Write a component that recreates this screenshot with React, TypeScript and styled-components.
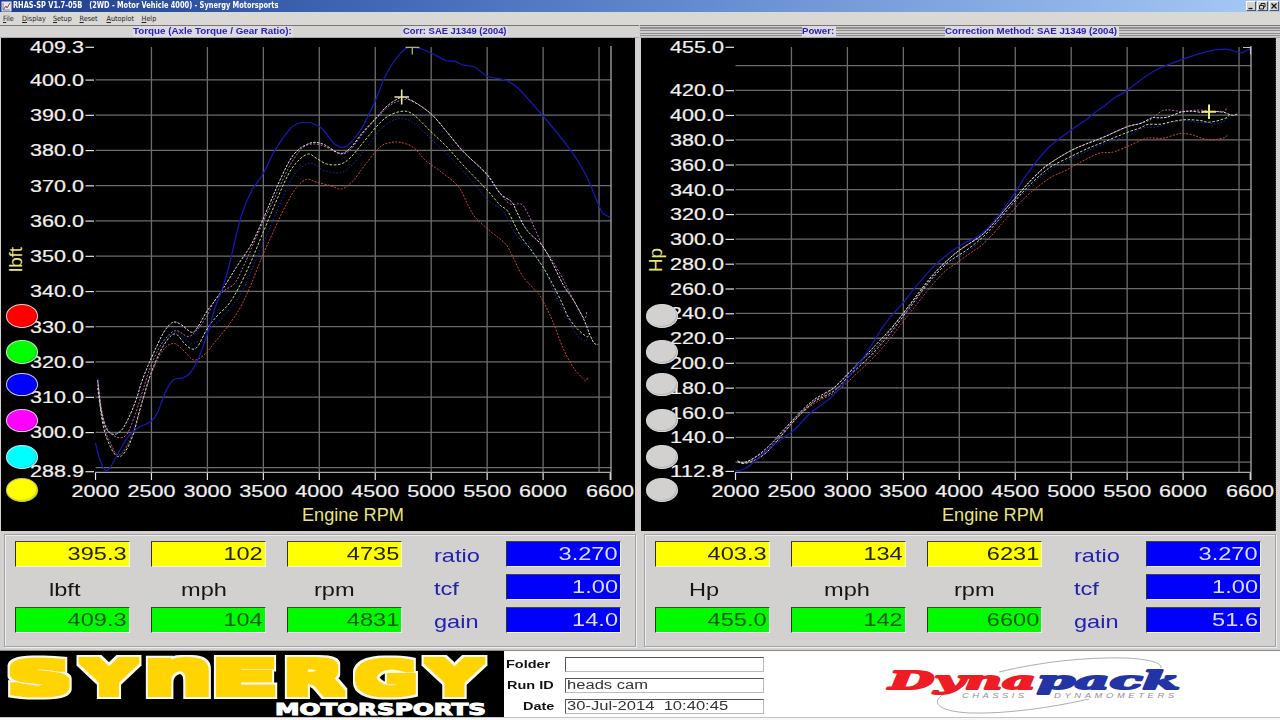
// Library imports
import React, { FC } from 'react';
import styled, { createGlobalStyle } from 'styled-components';

type Point = [number, number];

interface Channel {
    color: string;
    dash?: string;
    points: Point[];
}

interface ReadoutCell {
    peak: string;
    unit: string;
    indent: number;
    compare: string;
}

const GlobalStyle = createGlobalStyle`
    * {
        box-sizing: border-box;
    }

    body {
        margin: 0;
        background: #f6f6f6;
        font-family: 'Liberation Sans', Arial, sans-serif;
        overflow: hidden;
    }
`;

const Window = styled.div`
    width: 1280px;
    height: 718px;
    display: flex;
    flex-direction: column;
    background: #d2d1d0;
`;

const TitleBar = styled.div`
    height: 12px;
    display: flex;
    align-items: center;
    padding: 0 1px 0 1px;
    background: linear-gradient(90deg, #1e3d8c 0%, #3c62b0 25%, #6c93d4 60%, #a8caf6 100%);
`;

const Stretch = styled.span<{ $x: number; $origin?: string }>`
    display: inline-block;
    white-space: pre;
    transform: scaleX(${({ $x }) => $x});
    transform-origin: ${({ $origin }) => $origin || 'left'} center;
`;

const Title = styled.div`
    flex: 1;
    margin-left: 1px;
    color: #fff;
    font: bold 8px/12px 'DejaVu Sans Condensed', 'DejaVu Sans', sans-serif;
`;

const WindowButtons = styled.div`
    display: flex;
    gap: 1px;
`;

const WindowButton = styled.div`
    width: 10.5px;
    height: 10px;
    display: flex;
    background: #d6d3ce;
    border: 1px solid;
    border-color: #fff #555 #555 #fff;
`;

const MenuBar = styled.div`
    height: 13px;
    display: flex;
    background: #dad8d4;
    padding-left: 3px;
`;

const MenuItem = styled.div<{ $width: number }>`
    width: ${({ $width }) => $width}px;
    color: #222;
    font: 7.2px/14px 'DejaVu Sans Condensed', 'DejaVu Sans', sans-serif;

    &::first-letter {
        text-decoration: underline;
    }
`;

const Panels = styled.div`
    display: flex;
    height: 625px;
`;

const Panel = styled.div`
    width: 640px;
    display: flex;
    flex-direction: column;
`;

const Caption = styled.div<{ $striped?: boolean }>`
    height: 13px;
    display: flex;
    border-top: 1px solid #777;
    border-bottom: 1px solid #aaa;
    margin-right: ${({ $striped }) => ($striped ? 0 : 1)}px;
    background: ${({ $striped }) =>
        $striped ? 'repeating-linear-gradient(180deg, #cfcfcf 0 1.5px, #8e8e8e 1.5px 2.6px)' : '#d6d4d2'};
`;

const CaptionText = styled.div<{ $left: number; $width: number }>`
    margin-left: ${({ $left }) => $left}px;
    width: ${({ $width }) => $width}px;
    background: #dcdbe0;
    color: #2a22b4;
    font-size: 9px;
    line-height: 11px;
    font-weight: bold;
    white-space: nowrap;
`;

const ChartArea = styled.div<{ $dotted?: boolean }>`
    position: relative;
    height: 493px;
    margin: 0 ${({ $dotted }) => ($dotted ? 4 : 5)}px 0 1px;
    border-right: ${({ $dotted }) => ($dotted ? '1px dotted #333' : 'none')};
    background: #000;
`;

const ChartSvg = styled.svg`
    display: block;
    font-family: 'Liberation Sans', Arial, sans-serif;
`;

const Lamps = styled.div`
    position: absolute;
    left: 5px;
    top: 266px;
    display: grid;
    grid-template-rows: 36px 32.5px 36px 36.5px 33px 24px;
`;

const Lamp = styled.button<{ $color: string; $rim: string }>`
    width: 32px;
    height: 23.5px;
    padding: 0;
    border: 1.8px solid ${({ $rim }) => $rim};
    border-radius: 50%;
    background: ${({ $color }) => $color};
    box-shadow: inset -1px -1px 0.5px rgba(0, 0, 0, 0.14);
`;

const Readout = styled.div`
    flex: 1;
    margin: 3px 4px 3px 4px;
    padding: 6px 10px 0;
    border: 1px solid #a2a2a2;
    box-shadow: inset 1px 1px #eee, 1px 1px #eee;
    display: grid;
    grid-template-columns: 115px 115px 115px 61.5px 115px;
    grid-template-rows: 26px 26px 26px;
    column-gap: 21px;
    row-gap: 7px;
    align-content: start;
`;

const Field = styled.div<{ $tone: string; $ink: string }>`
    height: 26px;
    padding-right: 2px;
    border: 1px solid;
    border-color: #444 #f2f2f2 #f2f2f2 #333;
    background: ${({ $tone }) => $tone};
    color: ${({ $ink }) => $ink};
    font-size: 19px;
    line-height: 24px;
    text-align: right;
`;

const Unit = styled.div<{ $indent: number; $color?: string }>`
    padding-left: ${({ $indent }) => $indent}px;
    color: ${({ $color }) => $color || '#151515'};
    font-size: 19px;
    line-height: ${({ $color }) => ($color ? 30 : 31)}px;
`;

const Footer = styled.div`
    height: 68px;
    display: flex;
    background: #fff;
    border-top: 1px solid #888;
    border-bottom: 1px solid #c4c4c4;
`;

const Sponsor = styled.div`
    width: 504px;
    background: #000;
`;

const RunForm = styled.div`
    width: 366px;
    padding-top: 6px;
    display: flex;
    flex-direction: column;
    gap: 6px;
`;

const FormRow = styled.div`
    height: 15px;
    display: flex;
`;

const FormLabel = styled.label<{ $indent: number }>`
    width: 61px;
    padding-left: ${({ $indent }) => $indent}px;
    color: #111;
    font-size: 11.3px;
    line-height: 15px;
    font-weight: bold;
    white-space: nowrap;
`;

const FormValue = styled.div`
    width: 199px;
    height: 15px;
    padding-left: 1px;
    border: 1px solid;
    border-color: #555 #bbb #bbb #555;
    color: #333;
    font-size: 12px;
    line-height: 13px;
`;

const plot = { left: 95.5, right: 611, top: 47, bottom: 472 };
const rpmScale = 0.1119;
const torqueScale = 3.525;
const powerScale = 1.2394;

const rpmX = (rpm: number) => plot.left + (rpm - 2000) * rpmScale;
const torqueY = (lbft: number) => plot.top + (409.3 - lbft) * torqueScale;
const powerY = (hp: number) => plot.top + (455 - hp) * powerScale;

// Torque traces, in plot units
const channels: Channel[] = [
    {
        color: '#d0483c',
        dash: '2 1.4',
        points: [
            [98, 385], [104, 425], [111, 444], [118, 455], [126, 448], [135, 428], [143, 400], [152, 372], [163, 350],
            [174, 343.5], [183, 350], [194, 360], [205, 354], [215, 342], [228, 326], [240, 308], [250, 287],
            [262, 257], [275, 228], [287, 203], [297, 187], [306.7, 179.3], [316, 182], [330, 185.5], [341.7, 189],
            [353, 180.7], [365, 165], [380, 147], [390, 142.7], [400, 142.3], [413.3, 147.3], [425, 160], [440, 171],
            [458, 186], [467, 203], [475, 217], [490, 231], [505, 243.3], [512, 255], [523, 276.7], [537, 292],
            [543, 301], [553, 322], [563, 348], [573, 367], [583, 378.7], [586, 380.5], [588, 377],
        ],
    },
    {
        color: '#2020b4',
        dash: '1.6 1.8',
        points: [
            [98, 379], [104, 425], [111, 446], [118, 455], [126, 446], [135, 425], [150, 377], [163, 345], [176, 332],
            [190, 343], [200, 340], [210, 328], [220, 320], [232, 306], [243, 290], [255, 262], [268, 232],
            [280, 204], [292, 178], [303, 166], [312, 163.5], [325, 171], [341, 172.5], [352, 165], [364, 151],
            [378, 132], [390, 122], [402, 118.3], [415, 124], [432, 140], [450, 157], [470, 179], [490, 202],
            [503, 211], [515, 233], [528, 248], [543, 268], [557, 298], [568, 318], [576, 334], [585, 341], [588, 337],
        ],
    },
    {
        color: '#b8dc8c',
        dash: '2.6 1.6',
        points: [
            [97.7, 388], [103, 425], [110, 446], [117.5, 456.5], [125, 452], [133, 435], [140, 409], [150, 376],
            [160, 352], [170, 336.7], [176.7, 334.5], [184, 343], [191.7, 349], [198, 346], [207, 329], [217, 316],
            [228, 305], [238, 289], [250, 264], [262, 235], [275, 204], [288, 175], [298, 161], [308.3, 154],
            [316, 158], [326.7, 164], [340, 164.3], [350, 158], [361.7, 144.3], [376.7, 126.3], [388.3, 116],
            [402, 111.3], [413, 114.3], [431, 131.7], [447, 147], [463, 165], [487, 190], [500, 205], [508, 211.7],
            [520, 235], [532, 251], [543, 267], [553, 285], [562, 303], [568, 316.5], [577, 328.5], [587, 336.7],
            [589, 333],
        ],
    },
    {
        color: '#b26ab0',
        dash: '2 1.6',
        points: [
            [97.7, 382], [102, 412], [108, 430], [118, 437.5], [127, 434], [136, 412], [143, 390], [150, 368],
            [158, 350], [166, 338], [176, 330.5], [188, 336.5], [197, 330], [207, 316], [215, 300], [225, 290],
            [235, 283], [245, 263], [260, 229], [275, 197], [288, 169], [298, 153], [305, 146], [315, 144],
            [326, 147], [341, 154], [351, 149], [364, 132], [377, 118], [389, 106], [402, 100], [413, 101],
            [433, 116], [447, 132], [464, 152], [487, 175], [500, 193], [510, 204], [521, 204], [527, 212],
            [535, 229], [543, 247], [552, 260], [563, 279], [573, 299], [584, 318], [587, 311],
        ],
    },
    {
        color: '#dcdcdc',
        dash: '2.6 1.2',
        points: [
            [97.7, 380], [101, 410], [106, 428], [113.3, 434.3], [121.7, 430], [130, 415], [136.7, 398],
            [141.7, 381.7], [148.3, 365], [155, 350], [163.3, 333], [170, 324.3], [175, 322], [181.7, 325],
            [191.7, 332.3], [198, 326.7], [206.7, 311.7], [220, 293.3], [236.7, 266.7], [250, 246.7], [258.3, 230],
            [270, 203], [280, 180], [290, 160], [298, 150], [306.7, 144.5], [315, 142.3], [325, 145], [340, 153.3],
            [350, 148.3], [363.3, 131.7], [376.7, 117.3], [388.3, 105], [401.7, 97.3], [410, 100], [421.7, 106.7],
            [433.3, 116], [446.7, 131.7], [463.3, 151.7], [486.7, 174], [500, 193.3], [511.7, 202], [516.7, 211.7],
            [526.7, 230], [541.7, 245], [551.7, 261.7], [563.3, 285], [573.3, 300], [583.3, 318.3], [590, 335],
            [594.3, 343.3], [598.3, 344.3],
        ],
    },
    {
        color: '#1818bc',
        points: [
            [95.5, 443], [100, 460], [106, 470.5], [111.7, 465], [120, 450], [128, 437], [138, 428], [151.7, 421],
            [158, 411.5], [165, 393], [171.7, 381.5], [177, 378.5], [183, 378], [190, 373], [197, 361.5], [207, 335],
            [215, 308], [223, 287], [230, 262], [237.5, 230], [243, 211], [252, 190], [263, 174], [275, 150],
            [290, 129], [298, 123.5], [305, 122.5], [313, 123.5], [323, 129.5], [333, 142.5], [341.7, 147.3],
            [350, 143.3], [361.7, 128.3], [370, 111.7], [376, 99.3], [385, 76.7], [395, 60], [405, 49],
            [411.7, 47.3], [421.7, 49], [433, 54], [446.7, 60.7], [455, 61.3], [463, 65], [475, 67.3], [486.7, 76],
            [505, 80], [518, 88.3], [543, 116], [568, 146.7], [585, 173.3], [598, 203.3], [603, 213.3], [610, 217],
        ],
    },
];

// hp = lbft * rpm / 5252
const toPower = ([x, y]: Point): Point => {
    const rpm = 2000 + (x - plot.left) / rpmScale;
    const lbft = 409.3 - (y - plot.top) / torqueScale;
    return [x, powerY((lbft * rpm) / 5252)];
};

const smoothPath = (points: Point[]) =>
    points.reduce((d, [x, y], i) => {
        if (i === 0) return `M${x} ${y}`;
        const [ax, ay] = points[Math.max(i - 2, 0)];
        const [bx, by] = points[i - 1];
        const [cx, cy] = points[Math.min(i + 1, points.length - 1)];
        return `${d}C${bx + (x - ax) / 6} ${by + (y - ay) / 6} ${x - (cx - bx) / 6} ${y - (cy - by) / 6} ${x} ${y}`;
    }, '');

const rpmTicks = [2000, 2500, 3000, 3500, 4000, 4500, 5000, 5500, 6000, 6600];
const rpmGrid = [2500, 3000, 3500, 4000, 4500, 5000, 5500, 6000, 6500];

const range = (from: number, to: number, step: number) => {
    const out: number[] = [];
    for (let v = from; v <= to; v += step) out.push(v);
    return out;
};

interface ChartProps {
    unit: string;
    unitLength: number;
    labels: number[];
    grid: number[];
    scaleY: (v: number) => number;
    convert?: (p: Point) => Point;
    lamps: string[][];
    dotted?: boolean;
    children?: React.ReactNode;
}

const Chart: FC<ChartProps> = (props: ChartProps) => {
    const { unit, unitLength, labels, grid, scaleY, convert, lamps, dotted, children } = props;

    return (
        <ChartArea $dotted={dotted}>
            <ChartSvg width="634" height="493" viewBox="1 38 634 493">
                <g stroke="#6c6c6c" strokeWidth="1.3">
                    {grid.map((v) => (
                        <line key={v} x1={plot.left} x2={plot.right} y1={scaleY(v)} y2={scaleY(v)} />
                    ))}
                    {rpmGrid.map((rpm) => (
                        <line key={rpm} x1={rpmX(rpm)} x2={rpmX(rpm)} y1={plot.top} y2={plot.bottom} />
                    ))}
                </g>
                <path d="M95 472.4H611M611 46V480" stroke="#a8a8a8" strokeWidth="1.3" fill="none" />
                {channels.map(({ color, dash, points }) => (
                    <path
                        key={color}
                        d={smoothPath(convert ? points.map(convert) : points)}
                        fill="none"
                        stroke={color}
                        strokeWidth={dash ? 1 : 1.2}
                        strokeDasharray={dash}
                    />
                ))}
                <g stroke="#e4e4e4" strokeWidth="1.2">
                    {labels.map((v) => (
                        <line key={v} x1="85.5" x2="94" y1={scaleY(v) + 0.3} y2={scaleY(v) + 0.3} />
                    ))}
                    {rpmTicks.map((rpm) => (
                        <line key={rpm} x1={Math.min(rpmX(rpm), 611)} x2={Math.min(rpmX(rpm), 611)} y1="473" y2="480" />
                    ))}
                </g>
                <g fill="#f0f0f0" stroke="#f0f0f0" strokeWidth="0.2" fontSize="16.6">
                    {labels.map((v) => (
                        <text key={v} x="30" y={scaleY(v) + 6} textLength="54" lengthAdjust="spacingAndGlyphs">
                            {v.toFixed(1)}
                        </text>
                    ))}
                    {rpmTicks.map((rpm) => (
                        <text
                            key={rpm}
                            x={Math.min(rpmX(rpm), 610) - 24}
                            y="496.5"
                            textLength="48"
                            lengthAdjust="spacingAndGlyphs"
                        >
                            {rpm}
                        </text>
                    ))}
                </g>
                <g fill="#e6e67c" fontSize="18.6">
                    <text x="302" y="521" textLength="102" lengthAdjust="spacingAndGlyphs">
                        Engine RPM
                    </text>
                    <text
                        transform="translate(22.3 272) rotate(-90)"
                        textLength={unitLength}
                        lengthAdjust="spacingAndGlyphs"
                    >
                        {unit}
                    </text>
                </g>
                {children}
            </ChartSvg>
            <Lamps>
                {lamps.map(([color, rim], i) => (
                    <Lamp key={i} $color={color} $rim={rim} />
                ))}
            </Lamps>
        </ChartArea>
    );
};

interface ReadoutProps {
    cells: ReadoutCell[];
    gain: string;
}

const Readouts: FC<ReadoutProps> = ({ cells, gain }: ReadoutProps) => (
    <Readout>
        {cells.map(({ unit, peak }) => (
            <Field key={unit} $tone="#ffff00" $ink="#222200">
                <Stretch $x={1.24} $origin="right">{peak}</Stretch>
            </Field>
        ))}
        <Unit $indent={11} $color="#2222aa">
            <Stretch $x={1.24}>ratio</Stretch>
        </Unit>
        <Field $tone="#0000fb" $ink="#dcdcff">
            <Stretch $x={1.24} $origin="right">3.270</Stretch>
        </Field>
        {cells.map(({ unit, indent }) => (
            <Unit key={unit} $indent={indent}>
                <Stretch $x={1.24}>{unit}</Stretch>
            </Unit>
        ))}
        <Unit $indent={11} $color="#2222aa">
            <Stretch $x={1.24}>tcf</Stretch>
        </Unit>
        <Field $tone="#0000fb" $ink="#dcdcff">
            <Stretch $x={1.24} $origin="right">1.00</Stretch>
        </Field>
        {cells.map(({ unit, compare }) => (
            <Field key={unit} $tone="#00fb00" $ink="#0a5a0a">
                <Stretch $x={1.24} $origin="right">{compare}</Stretch>
            </Field>
        ))}
        <Unit $indent={11} $color="#2222aa">
            <Stretch $x={1.24}>gain</Stretch>
        </Unit>
        <Field $tone="#0000fb" $ink="#dcdcff">
            <Stretch $x={1.24} $origin="right">{gain}</Stretch>
        </Field>
    </Readout>
);

// glyph, left edge, right edge, ink start and end in em, ink height in em
const wordmark: [string, number, number, number, number, number][] = [
    ['S', 9, 71, 0.066, 0.66, 0.755],
    ['Y', 78, 140, -0.01, 0.734, 0.729],
    ['n', 148, 209, 0.084, 0.634, 0.56],
    ['E', 216, 278, 0.092, 0.637, 0.729],
    ['R', 287, 348, 0.092, 0.777, 0.729],
    ['G', 355, 416, 0.05, 0.747, 0.755],
    ['Y', 423, 486, -0.01, 0.734, 0.729],
];

const SynergyLogo: FC = () => (
    <svg
        width="504"
        height="66"
        viewBox="0 652 504 66"
        fontFamily="'DejaVu Sans', sans-serif"
        fontWeight="bold"
        overflow="visible"
    >
        <filter id="halo" x="-5%" y="-20%" width="110%" height="140%">
            <feMorphology in="SourceGraphic" operator="dilate" radius="3 3" result="heavy" />
            <feMorphology in="SourceAlpha" operator="dilate" radius="5 5" result="wide" />
            <feFlood floodColor="#fffbe8" />
            <feComposite in2="wide" operator="in" result="rim" />
            <feMerge>
                <feMergeNode in="rim" />
                <feMergeNode in="heavy" />
            </feMerge>
        </filter>
        <g filter="url(#halo)" fill="#ffd400" fontSize="48">
            {wordmark.map(([glyph, left, right, inkStart, inkEnd, inkHeight], i) => {
                const sx = (right - left - 6) / ((inkEnd - inkStart) * 48);
                const sy = 34 / (inkHeight * 48);
                return (
                    <text key={i} transform={`translate(${left + 3 - inkStart * 48 * sx} 695) scale(${sx} ${sy})`}>
                        {glyph}
                    </text>
                );
            })}
        </g>
        <text
            x="275"
            y="715.8"
            fill="#fff"
            stroke="#fff"
            strokeWidth="1"
            fontSize="15"
            textLength="211"
            lengthAdjust="spacingAndGlyphs"
        >
            MOTORSPORTS
        </text>
    </svg>
);

const DynapackLogo: FC = () => (
    <svg width="410" height="66" viewBox="870 652 410 66">
        <g fill="none" stroke="#a4a4a8" strokeWidth="0.9">
            <path d="M999 673C1040 663 1085 658 1125 659C1150 660 1162 664 1161 669" />
            <path d="M944 695C932 702 934 712 970 714C1005 715 1050 709 1089 700" />
        </g>
        <g
            fontFamily="'DejaVu Serif', serif"
            fontWeight="bold"
            fontStyle="italic"
            fontSize="24.5"
            strokeWidth="1.9"
            strokeLinejoin="round"
        >
            <text x="889" y="690" fill="#ee1c24" stroke="#ee1c24" textLength="147" lengthAdjust="spacingAndGlyphs">
                Dyna
            </text>
            <text x="1037" y="690" fill="#2334a4" stroke="#2334a4" textLength="143" lengthAdjust="spacingAndGlyphs">
                pack
            </text>
        </g>
        <g fill="#909094" fontFamily="'Liberation Sans', sans-serif" fontStyle="italic" fontSize="7">
            <text transform="translate(962 699) scale(1.35 1)" textLength="46">
                CHASSIS
            </text>
            <text transform="translate(1054 699) scale(1.35 1)" textLength="89">
                DYNAMOMETERS
            </text>
        </g>
    </svg>
);

const menu: [string, number][] = [
    ['File', 19],
    ['Display', 31],
    ['Setup', 26.5],
    ['Reset', 27],
    ['Autoplot', 35],
    ['Help', 30],
];

const colorLamps = [
    ['#ff0000', '#ecd0d0'],
    ['#00ff00', '#c4e8c4'],
    ['#0000ff', '#c8c8f0'],
    ['#ff00ff', '#ecc8ec'],
    ['#00ffff', '#c4ecec'],
    ['#ffff00', '#c8c864'],
];
const greyLamps = colorLamps.map(() => ['#d2d1d0', '#d8d8d8']);

const torqueCells: ReadoutCell[] = [
    { peak: '395.3', unit: 'lbft', indent: 33.5, compare: '409.3' },
    { peak: '102', unit: 'mph', indent: 29.5, compare: '104' },
    { peak: '4735', unit: 'rpm', indent: 27, compare: '4831' },
];

const powerCells: ReadoutCell[] = [
    { peak: '403.3', unit: 'Hp', indent: 33.5, compare: '455.0' },
    { peak: '134', unit: 'mph', indent: 32.5, compare: '142' },
    { peak: '6231', unit: 'rpm', indent: 27, compare: '6600' },
];

const App: FC = () => (
    <>
        <GlobalStyle />
        <Window>
            <TitleBar>
                <svg width="11" height="11" viewBox="0 0 11 11">
                    <rect x="0.5" y="0.5" width="10" height="10" fill="#e8e4ec" />
                    <path d="M2 9L5 5L6 7L9 2" stroke="#a04848" fill="none" />
                    <path d="M2 2V9H9" stroke="#5868a0" fill="none" strokeWidth="0.8" />
                </svg>
                <Title>
                    <Stretch $x={0.922}>RHAS-SP V1.7-05B   (2WD - Motor Vehicle 4000) - Synergy Motorsports</Stretch>
                </Title>
                <WindowButtons>
                    <WindowButton>
                        <svg width="8" height="8">
                            <path d="M1.5 6.5H5.5" stroke="#111" strokeWidth="1.3" />
                        </svg>
                    </WindowButton>
                    <WindowButton>
                        <svg width="8" height="8">
                            <path d="M3 1.5H7V5H6M3 1.5V3M1.5 3.5H5.5V7H1.5Z" stroke="#111" fill="none" strokeWidth="0.9" />
                        </svg>
                    </WindowButton>
                    <WindowButton>
                        <svg width="8" height="8">
                            <path d="M1.5 1.5L6.5 6.5M6.5 1.5L1.5 6.5" stroke="#111" strokeWidth="1.2" />
                        </svg>
                    </WindowButton>
                </WindowButtons>
            </TitleBar>
            <MenuBar>
                {menu.map(([name, width]) => (
                    <MenuItem key={name} $width={width}>
                        {name}
                    </MenuItem>
                ))}
            </MenuBar>
            <Panels>
                <Panel>
                    <Caption>
                        <CaptionText $left={133} $width={160}>
                            <Stretch $x={1.09}>Torque (Axle Torque / Gear Ratio):</Stretch>
                        </CaptionText>
                        <CaptionText $left={110} $width={105}>
                            <Stretch $x={1.045}>Corr: SAE J1349 (2004)</Stretch>
                        </CaptionText>
                    </Caption>
                    <Chart
                        unit="lbft"
                        unitLength={25}
                        labels={[409.3, ...range(300, 400, 10), 288.9]}
                        grid={range(290, 400, 10)}
                        scaleY={torqueY}
                        lamps={colorLamps}
                    >
                        <path d="M394.5 97H409M401.7 89.5V104.5" stroke="#e4e4b0" strokeWidth="1.6" />
                        <path d="M405.5 47.3H419.5M412.3 47V54.5" stroke="#a8b878" strokeWidth="1.3" />
                    </Chart>
                    <Readouts cells={torqueCells} gain="14.0" />
                </Panel>
                <Panel>
                    <Caption $striped>
                        <CaptionText $left={162} $width={34}>
                            <Stretch $x={1.07}>Power:</Stretch>
                        </CaptionText>
                        <CaptionText $left={109} $width={174}>
                            <Stretch $x={1.075}>Correction Method: SAE J1349 (2004)</Stretch>
                        </CaptionText>
                    </Caption>
                    <Chart
                        unit="Hp"
                        unitLength={24}
                        labels={[455, ...range(140, 420, 20), 112.8]}
                        grid={range(120, 440, 20)}
                        scaleY={powerY}
                        convert={toPower}
                        lamps={greyLamps}
                        dotted
                    >
                        <path d="M561.5 111.8H576M569 104.5V119" stroke="#ecec70" strokeWidth="2" />
                        <path d="M603 47.5H610.5V54.5" stroke="#b8c8b8" strokeWidth="1.2" fill="none" />
                    </Chart>
                    <Readouts cells={powerCells} gain="51.6" />
                </Panel>
            </Panels>
            <Footer>
                <Sponsor>
                    <SynergyLogo />
                </Sponsor>
                <RunForm>
                    <FormRow>
                        <FormLabel $indent={1.5}>
                            <Stretch $x={1.28}>Folder</Stretch>
                        </FormLabel>
                        <FormValue />
                    </FormRow>
                    <FormRow>
                        <FormLabel $indent={2.5}>
                            <Stretch $x={1.28}>Run ID</Stretch>
                        </FormLabel>
                        <FormValue>
                            <Stretch $x={1.38}>heads cam</Stretch>
                        </FormValue>
                    </FormRow>
                    <FormRow>
                        <FormLabel $indent={18.5}>
                            <Stretch $x={1.28}>Date</Stretch>
                        </FormLabel>
                        <FormValue>
                            <Stretch $x={1.38}>30-Jul-2014  10:40:45</Stretch>
                        </FormValue>
                    </FormRow>
                </RunForm>
                <DynapackLogo />
            </Footer>
        </Window>
    </>
);

export default App;
